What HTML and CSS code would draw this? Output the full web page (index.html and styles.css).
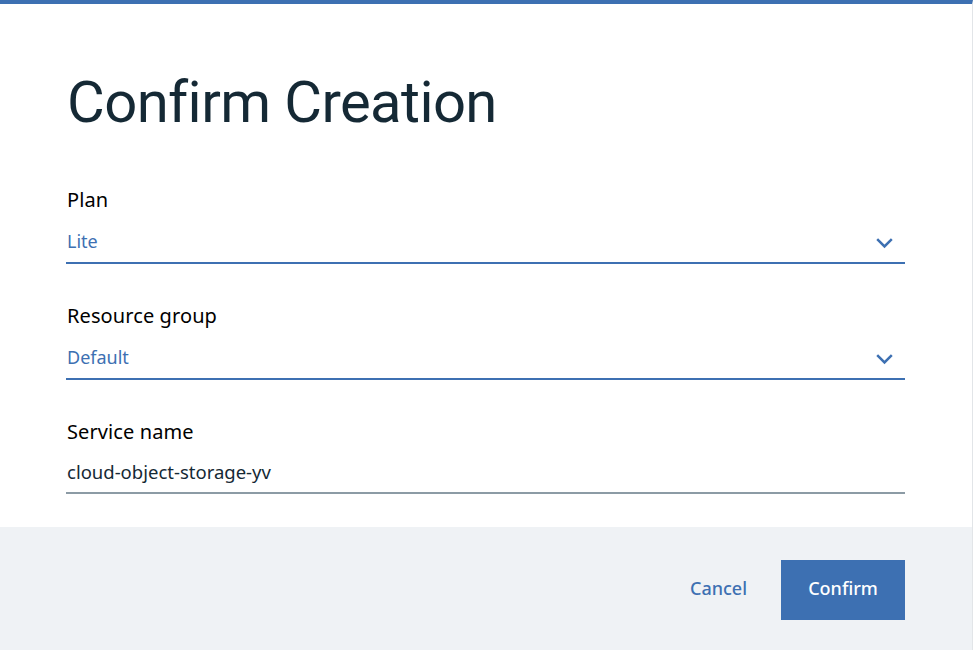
FILE: index.html
```html
<!DOCTYPE html>
<html>
<head>
<meta charset="utf-8">
<link rel="stylesheet" href="styles.css">
</head>
<body>
<div class="modal">
  <div class="content">
    <h1 class="title">Confirm Creation</h1>
    <div class="field">
      <div class="label">Plan</div>
      <div class="select">
        <span class="value">Lite</span>
        <svg class="chev" width="17" height="10" viewBox="0 0 17 10"><path d="M1.2 1.2 L8.5 8.4 L15.8 1.2" fill="none" stroke="#3d70b2" stroke-width="2.5"/></svg>
      </div>
    </div>
    <div class="field">
      <div class="label">Resource group</div>
      <div class="select">
        <span class="value">Default</span>
        <svg class="chev" width="17" height="10" viewBox="0 0 17 10"><path d="M1.2 1.2 L8.5 8.4 L15.8 1.2" fill="none" stroke="#3d70b2" stroke-width="2.5"/></svg>
      </div>
    </div>
    <div class="field">
      <div class="label">Service name</div>
      <div class="input">cloud-object-storage-yv</div>
    </div>
  </div>
  <div class="footer">
    <button class="btn-cancel">Cancel</button>
    <button class="btn-confirm">Confirm</button>
  </div>
</div>
</body>
</html>
```
FILE: styles.css
```css
html, body {
  margin: 0;
  padding: 0;
  background: #ffffff;
}
body {
  font-family: "Noto Sans", "Open Sans", sans-serif;
  color: #152935;
}
.modal {
  width: 973px;
  height: 650px;
  border-top: 4px solid #3d70b2;
  border-right: 1px solid #e2e5e8;
  box-sizing: border-box;
  display: flex;
  flex-direction: column;
}
.content {
  padding: 0 67px 33px 67px;
  display: flex;
  flex-direction: column;
  gap: 38px;
}
.title {
  margin: 0 0 -38px 0;
  padding-top: 62px;
  height: 182px;
  box-sizing: border-box;
  font-family: "Roboto", "Noto Sans", sans-serif;
  font-size: 58px;
  font-weight: 400;
  line-height: 72px;
  letter-spacing: -0.6px;
  color: #152935;
}
.label {
  font-size: 20px;
  line-height: 28px;
  height: 42px;
  color: #000000;
  letter-spacing: 0.1px;
}
.select {
  height: 34px;
  border-bottom: 2px solid #3d70b2;
  display: flex;
  justify-content: space-between;
  align-items: flex-start;
  padding-right: 12px;
  margin-left: -1px;
}
.value {
  font-size: 18px;
  line-height: 26px;
  color: #3d70b2;
  padding-left: 1px;
}
.chev {
  margin-top: 10px;
  overflow: visible;
}
.input {
  height: 32px;
  font-size: 18.5px;
  line-height: 24px;
  color: #152935;
  border-bottom: 2px solid #8c9ba5;
  margin-left: -1px;
  padding-left: 1px;
}
.footer {
  flex: 1;
  background: #eff2f5;
  display: flex;
  justify-content: flex-end;
  align-items: flex-start;
  padding: 33px 67px 0 0;
  gap: 34px;
}
.btn-cancel {
  border: none;
  background: transparent;
  font-family: inherit;
  font-size: 18px;
  font-weight: 500;
  color: #3d70b2;
  height: 60px;
  padding: 0 0 4px 0;
  cursor: pointer;
}
.btn-confirm {
  border: none;
  background: #3d70b2;
  color: #ffffff;
  font-family: inherit;
  font-size: 18px;
  font-weight: 500;
  width: 124px;
  height: 60px;
  padding: 0 0 4px 0;
  cursor: pointer;
}
```
